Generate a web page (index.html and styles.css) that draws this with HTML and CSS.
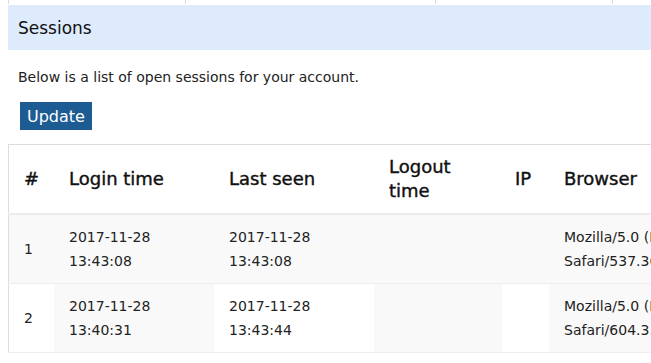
FILE: index.html
```html
<!DOCTYPE html>
<html lang="en">
<head>
    <meta charset="UTF-8">
    <title>Sessions</title>
    <link rel="stylesheet" href="styles.css">
</head>
<body>

    <!-- bas du tableau précédent -->
    <div class="prev-table">
        <div class="prev-cell c1"></div>
        <div class="prev-cell c2"></div>
        <div class="prev-cell c3"></div>
        <div class="prev-cell c4"></div>
    </div>

    <div class="section-header">
        <h2>Sessions</h2>
    </div>

    <div class="section-body">
        <p>Below is a list of open sessions for your account.</p>
        <button class="button">Update</button>
    </div>

    <table class="sessions">
        <thead>
            <tr>
                <th class="col-num">#</th>
                <th class="col-login">Login time</th>
                <th class="col-seen">Last seen</th>
                <th class="col-logout">Logout<br>time</th>
                <th class="col-ip">IP</th>
                <th class="col-browser">Browser</th>
            </tr>
        </thead>
        <tbody>
            <tr class="row-odd">
                <td>1</td>
                <td>2017-11-28<br>13:43:08</td>
                <td>2017-11-28<br>13:43:08</td>
                <td></td>
                <td></td>
                <td>Mozilla/5.0 (Macintosh; Intel Mac OS X 10_13_1) AppleWebKit/537.36<br>Safari/537.36</td>
            </tr>
            <tr class="row-even">
                <td>2</td>
                <td>2017-11-28<br>13:40:31</td>
                <td>2017-11-28<br>13:43:44</td>
                <td></td>
                <td></td>
                <td>Mozilla/5.0 (Macintosh; Intel Mac OS X 10_13_1) AppleWebKit/604.3.5<br>Safari/604.3.5</td>
            </tr>
        </tbody>
    </table>

</body>
</html>
```

FILE: styles.css
```css
body {
    font-family: 'DejaVu Sans', Verdana, sans-serif;
    color: #222;
    margin: 0 0 0 8px;
    overflow: hidden;
}

.prev-table {
    display: flex;
    height: 4px;
    margin-bottom: 1px;
}

.prev-cell {
    flex-shrink: 0;
    border-left: 1px solid #ddd;
}

.prev-cell.c1 { width: 176px; }
.prev-cell.c2 { width: 249px; }
.prev-cell.c3 { width: 176px; }
.prev-cell.c4 { width: 100px; }

.section-header {
    background-color: #deebfc;
    height: 45px;
    display: flex;
    align-items: center;
    padding-left: 10px;
}

.section-header h2 {
    margin: 0;
    font-size: 17px;
    font-weight: normal;
    color: #111;
}

.section-body {
    padding: 17px 12px 14px 10px;
}

.section-body p {
    margin: 0 0 15px 0;
    font-size: 14px;
    line-height: 20px;
}

.button {
    font-family: inherit;
    font-size: 16px;
    padding: 3px 7px;
    height: 28px;
    margin-left: 2px;
    background-color: #1d5c93;
    color: white;
    border: none;
    cursor: pointer;
}

.sessions {
    border-collapse: collapse;
    border: 1px solid #ddd;
    width: 1000px;
    table-layout: fixed;
}

th, td {
    text-align: left;
    padding: 10px 15px;
    vertical-align: middle;
}

th {
    font-size: 18px;
    font-weight: normal;
    -webkit-text-stroke: 0.4px #111;
    line-height: 24px;
    height: 48px;
    border-bottom: 2px solid #ececec;
    color: #111;
}

td {
    font-size: 14px;
    line-height: 24px;
    color: #222;
    white-space: nowrap;
    overflow: hidden;
    border-bottom: 1px solid #eee;
}

.col-num { width: 15px; }
.col-login { width: 130px; }
.col-seen { width: 130px; }
.col-logout { width: 98px; }
.col-ip { width: 17px; padding-left: 13px; padding-right: 17px; }
.col-browser { width: 429px; }

.row-odd td {
    background-color: #f9f9f9;
}

.row-even td:nth-child(even) {
    background-color: #f9f9f9;
}
```
